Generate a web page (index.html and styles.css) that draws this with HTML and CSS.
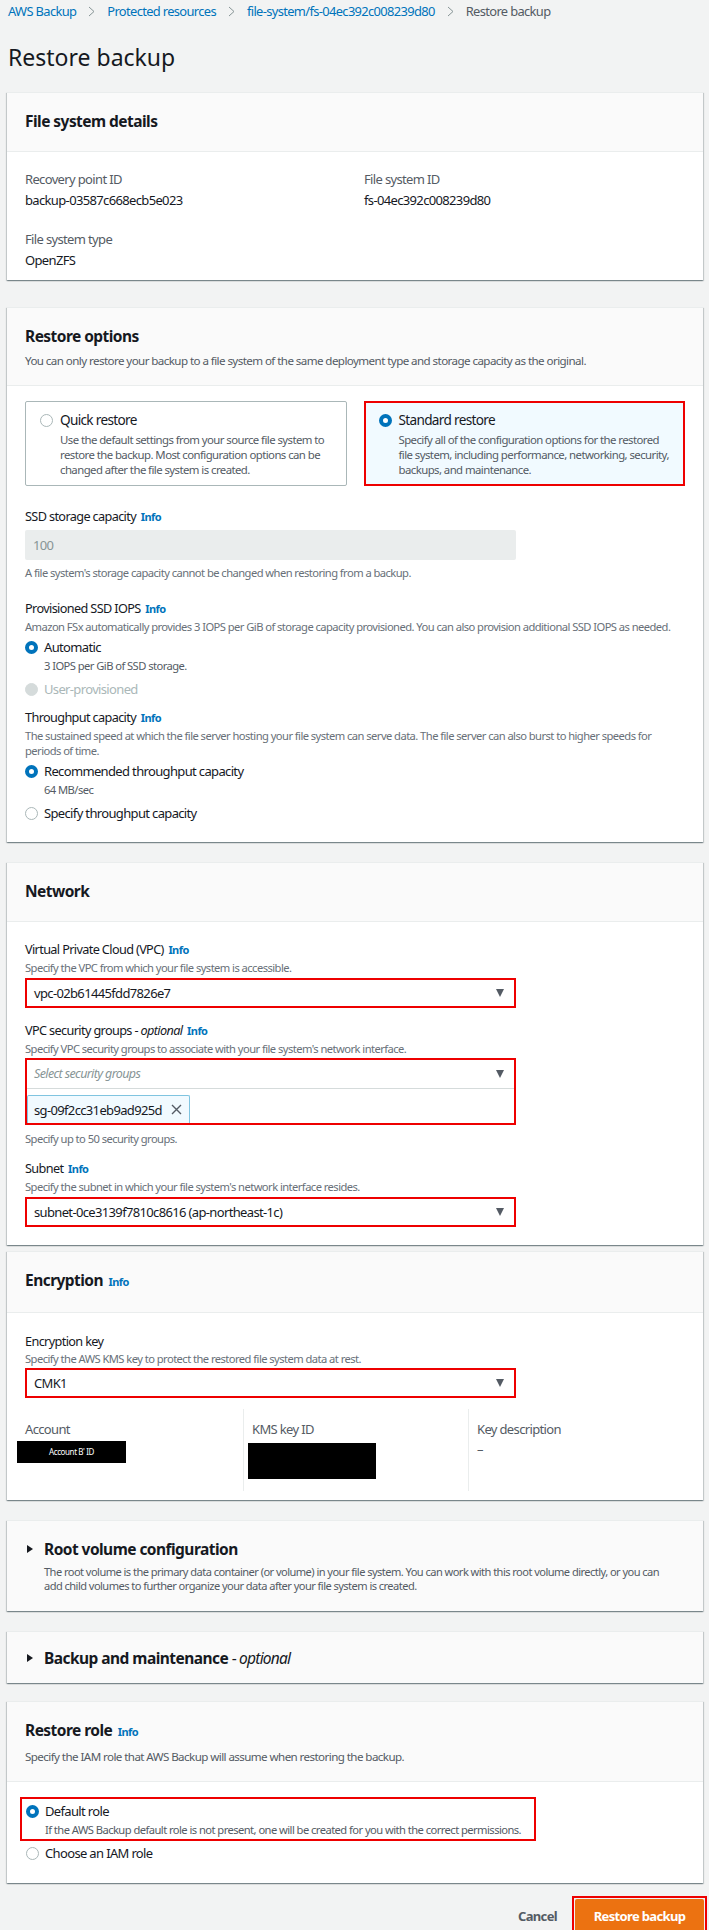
FILE: index.html
```html
<!DOCTYPE html>
<html lang="en">
<head>
<meta charset="utf-8">
<title>Restore backup</title>
<link rel="stylesheet" href="styles.css">
</head>
<body>
<div class="page">
  <nav class="crumbs">
    <a class="crumb-link">AWS Backup</a>
    <svg class="crumb-sep" width="7" height="11" viewBox="0 0 7 11"><path d="M1 1l5 4.5-5 4.5" fill="none" stroke="#879596" stroke-width="1"/></svg>
    <a class="crumb-link">Protected resources</a>
    <svg class="crumb-sep" width="7" height="11" viewBox="0 0 7 11"><path d="M1 1l5 4.5-5 4.5" fill="none" stroke="#879596" stroke-width="1"/></svg>
    <a class="crumb-link">file-system/fs-04ec392c008239d80</a>
    <svg class="crumb-sep" width="7" height="11" viewBox="0 0 7 11"><path d="M1 1l5 4.5-5 4.5" fill="none" stroke="#879596" stroke-width="1"/></svg>
    <span class="crumb-current">Restore backup</span>
  </nav>

  <h1 class="page-title">Restore backup</h1>

  <section class="card card-first">
    <header class="card-head">
      <h2 class="card-title">File system details</h2>
    </header>
    <div class="card-body details">
      <div class="kv">
        <div class="kv-label">Recovery point ID</div>
        <div class="kv-value">backup-03587c668ecb5e023</div>
      </div>
      <div class="kv">
        <div class="kv-label">File system ID</div>
        <div class="kv-value">fs-04ec392c008239d80</div>
      </div>
      <div class="kv">
        <div class="kv-label">File system type</div>
        <div class="kv-value">OpenZFS</div>
      </div>
    </div>
  </section>

  <section class="card card-gap27">
    <header class="card-head has-desc">
      <h2 class="card-title">Restore options</h2>
      <p class="card-desc">You can only restore your backup to a file system of the same deployment type and storage capacity as the original.</p>
    </header>
    <div class="card-body options-body">
      <div class="tiles">
        <div class="tile">
          <span class="radio"></span>
          <div class="tile-text">
            <div class="tile-title">Quick restore</div>
            <div class="tile-desc">Use the default settings from your source file system to restore the backup. Most configuration options can be changed after the file system is created.</div>
          </div>
        </div>
        <div class="tile tile-selected">
          <span class="radio on"></span>
          <div class="tile-text">
            <div class="tile-title">Standard restore</div>
            <div class="tile-desc">Specify all of the configuration options for the restored file system, including performance, networking, security, backups, and maintenance.</div>
          </div>
        </div>
      </div>

      <div class="field f-ssd">
        <div class="label">SSD storage capacity <a class="info">Info</a></div>
        <div class="input-disabled">100</div>
        <div class="helper h-after-input">A file system's storage capacity cannot be changed when restoring from a backup.</div>
      </div>

      <div class="field f-iops">
        <div class="label">Provisioned SSD IOPS <a class="info">Info</a></div>
        <div class="helper">Amazon FSx automatically provides 3 IOPS per GiB of storage capacity provisioned. You can also provision additional SSD IOPS as needed.</div>
        <div class="radios">
          <div class="radio-row">
            <span class="radio on"></span>
            <div>
              <div class="radio-label">Automatic</div>
              <div class="radio-sub">3 IOPS per GiB of SSD storage.</div>
            </div>
          </div>
          <div class="radio-row next">
            <span class="radio disabled"></span>
            <div class="radio-label muted">User-provisioned</div>
          </div>
        </div>
      </div>

      <div class="field f-throughput">
        <div class="label">Throughput capacity <a class="info">Info</a></div>
        <div class="helper">The sustained speed at which the file server hosting your file system can serve data. The file server can also burst to higher speeds for periods of time.</div>
        <div class="radios">
          <div class="radio-row">
            <span class="radio on"></span>
            <div>
              <div class="radio-label">Recommended throughput capacity</div>
              <div class="radio-sub">64 MB/sec</div>
            </div>
          </div>
          <div class="radio-row next">
            <span class="radio"></span>
            <div class="radio-label">Specify throughput capacity</div>
          </div>
        </div>
      </div>
    </div>
  </section>

  <section class="card card-gap20">
    <header class="card-head">
      <h2 class="card-title">Network</h2>
    </header>
    <div class="card-body network-body">
      <div class="field">
        <div class="label">Virtual Private Cloud (VPC) <a class="info">Info</a></div>
        <div class="helper">Specify the VPC from which your file system is accessible.</div>
        <div class="select marked">
          <span class="select-value">vpc-02b61445fdd7826e7</span>
          <span class="caret"></span>
        </div>
      </div>

      <div class="field f-next">
        <div class="label">VPC security groups - <i>optional</i> <a class="info">Info</a></div>
        <div class="helper">Specify VPC security groups to associate with your file system's network interface.</div>
        <div class="multi marked">
          <div class="multi-select">
            <span class="placeholder">Select security groups</span>
            <span class="caret"></span>
          </div>
          <div class="tokens">
            <span class="token">sg-09f2cc31eb9ad925d
              <svg class="token-x" width="11" height="11" viewBox="0 0 11 11"><path d="M1 1l9 9M10 1l-9 9" stroke="#545b64" stroke-width="1.4"/></svg>
            </span>
          </div>
        </div>
        <div class="helper h-after-multi">Specify up to 50 security groups.</div>
      </div>

      <div class="field f-next">
        <div class="label">Subnet <a class="info">Info</a></div>
        <div class="helper">Specify the subnet in which your file system's network interface resides.</div>
        <div class="select marked">
          <span class="select-value">subnet-0ce3139f7810c8616 (ap-northeast-1c)</span>
          <span class="caret"></span>
        </div>
      </div>
    </div>
  </section>

  <section class="card card-gap6">
    <header class="card-head">
      <h2 class="card-title">Encryption <a class="info">Info</a></h2>
    </header>
    <div class="card-body enc-body">
      <div class="field">
        <div class="label">Encryption key</div>
        <div class="helper">Specify the AWS KMS key to protect the restored file system data at rest.</div>
        <div class="select marked">
          <span class="select-value">CMK1</span>
          <span class="caret"></span>
        </div>
      </div>
      <div class="key-cols">
        <div class="key-col">
          <div class="kv-label">Account</div>
          <div class="redact redact-account">Account B' ID</div>
        </div>
        <div class="key-col divided">
          <div class="kv-label">KMS key ID</div>
          <div class="redact redact-kms"></div>
        </div>
        <div class="key-col divided">
          <div class="kv-label">Key description</div>
          <div class="kv-value dash">–</div>
        </div>
      </div>
    </div>
  </section>

  <section class="card card-gap20 collapsed">
    <div class="expander">
      <span class="tri"></span>
      <div>
        <h2 class="card-title">Root volume configuration</h2>
        <p class="card-desc exp-desc">The root volume is the primary data container (or volume) in your file system. You can work with this root volume directly, or you can add child volumes to further organize your data after your file system is created.</p>
      </div>
    </div>
  </section>

  <section class="card card-gap20 collapsed">
    <div class="expander short">
      <span class="tri"></span>
      <h2 class="card-title">Backup and maintenance <span class="opt">- <i>optional</i></span></h2>
    </div>
  </section>

  <section class="card card-gap18">
    <header class="card-head has-desc">
      <h2 class="card-title">Restore role <a class="info">Info</a></h2>
      <p class="card-desc">Specify the IAM role that AWS Backup will assume when restoring the backup.</p>
    </header>
    <div class="card-body role-body">
      <div class="role-mark">
        <div class="radio-row">
          <span class="radio on"></span>
          <div>
            <div class="radio-label">Default role</div>
            <div class="radio-sub nowrap">If the AWS Backup default role is not present, one will be created for you with the correct permissions.</div>
          </div>
        </div>
      </div>
      <div class="radio-row role-next">
        <span class="radio"></span>
        <div class="radio-label">Choose an IAM role</div>
      </div>
    </div>
  </section>

  <div class="actions">
    <button class="btn-link">Cancel</button>
    <div class="btn-mark">
      <button class="btn-primary">Restore backup</button>
    </div>
  </div>
</div>
</body>
</html>
```

FILE: styles.css
```css
* {
  box-sizing: border-box;
  letter-spacing: -0.05em;
}

html, body {
  margin: 0;
  padding: 0;
  background: #f2f3f3;
}

body {
  font-family: "Noto Sans", "Open Sans", "Liberation Sans", sans-serif;
  color: #16191f;
  font-size: 13px;
  line-height: 18px;
}

.page {
  padding: 2px 6px 0 7px;
}

/* breadcrumbs */
.crumbs {
  display: flex;
  align-items: center;
  gap: 12px;
  padding-left: 1px;
  font-size: 12.9px;
  line-height: 18px;
}
.crumb-link { color: #0073bb; }
.crumb-current { color: #545b64; }
.crumb-sep { flex: none; }

.page-title {
  margin: 23px 0 0 1px;
  font-size: 23px;
  line-height: 28px;
  font-weight: 400;
  letter-spacing: 0;
  color: #16191f;
}

/* cards */
.card {
  background: #fff;
  border-top: 1px solid #eaeded;
  box-shadow: 0 1px 1px 0 rgba(0, 28, 36, 0.3), 1px 1px 1px 0 rgba(0, 28, 36, 0.15), -1px 1px 1px 0 rgba(0, 28, 36, 0.15);
}
.card-first { margin-top: 21px; }
.card-gap27 { margin-top: 27px; }
.card-gap20 { margin-top: 20px; }
.card-gap18 { margin-top: 18px; }
.card-gap6 { margin-top: 6px; }

.card-head {
  background: #fafafa;
  border-bottom: 1px solid #eaeded;
  padding: 18px 18px 20px;
}
.card-head.has-desc { padding-bottom: 17px; }

.card-title {
  margin: 0;
  font-size: 15.5px;
  line-height: 20px;
  font-weight: 700;
  letter-spacing: -0.035em;
  color: #16191f;
}

.card-desc {
  margin: 7px 0 0;
  font-size: 11.6px;
  line-height: 15px;
  color: #545b64;
}

.card-body {
  padding: 18px 18px 11px;
}

/* details */
.details {
  display: grid;
  grid-template-columns: 339px 1fr;
  row-gap: 21px;
}
.kv-label {
  color: #545b64;
  font-size: 13px;
  line-height: 18px;
}
.kv-value {
  margin-top: 3px;
  color: #16191f;
  font-size: 13px;
  line-height: 18px;
}

/* info link */
.info {
  color: #0073bb;
  font-size: 11px;
  font-weight: 700;
  margin-left: 2px;
}

/* tiles */
.options-body { padding: 15px 18px 20px; }

.tiles {
  display: grid;
  grid-template-columns: 1fr 1fr;
  gap: 17px;
}
.tile {
  display: flex;
  align-items: flex-start;
  gap: 7px;
  border: 1px solid #aab7b8;
  border-radius: 2px;
  padding: 9px 10px 8px 14px;
  background: #fff;
}
.tile-selected {
  background: #f1faff;
  border: 2px solid #ee0000;
  border-radius: 0;
  padding: 8px 12px 7px 13px;
}
.tile .radio { margin-top: 3px; }
.tile-title {
  font-size: 13.6px;
  line-height: 18px;
  color: #16191f;
}
.tile-desc {
  margin-top: 3px;
  font-size: 11.4px;
  line-height: 15px;
  color: #545b64;
}

/* radio */
.radio {
  flex: none;
  display: block;
  width: 13px;
  height: 13px;
  border-radius: 50%;
  border: 1px solid #aab7b8;
  background: #fff;
}
.radio.on {
  border: 4px solid #0073bb;
}
.radio.disabled {
  border-color: #d5dbdb;
  background: #d5dbdb;
}

.radio-row {
  display: flex;
  align-items: flex-start;
  gap: 6px;
}
.radio-row .radio { margin-top: 2.5px; }
.radio-row.next { margin-top: 7px; }
.radio-label {
  font-size: 13px;
  line-height: 18px;
  color: #16191f;
}
.radio-label.muted { color: #aab7b8; }
.radio-sub {
  margin-top: 2px;
  font-size: 11.2px;
  line-height: 15px;
  color: #545b64;
}
.nowrap { white-space: nowrap; }

/* fields */
.label {
  font-size: 12.7px;
  line-height: 18px;
  color: #16191f;
}
.helper {
  margin-top: 1px;
  font-size: 11.2px;
  line-height: 15px;
  color: #687078;
}
.f-ssd { margin-top: 21px; }
.f-iops { margin-top: 18px; }
.f-throughput { margin-top: 10px; }
.radios { margin-top: 4px; }

.input-disabled {
  margin-top: 4px;
  width: 491px;
  height: 30px;
  background: #eaeded;
  color: #879596;
  font-size: 13px;
  line-height: 30px;
  padding-left: 8px;
  border-radius: 2px;
}
.h-after-input { margin-top: 5px; line-height: 16px; }

/* network */
.network-body { padding: 18px 18px 18px; }
.f-next { margin-top: 13px; }

.select {
  margin-top: 2.5px;
  width: 491px;
  height: 30px;
  display: flex;
  align-items: center;
  justify-content: space-between;
  padding: 0 10px 0 7px;
  border: 1px solid #aab7b8;
  border-radius: 2px;
  font-size: 13px;
  background: #fff;
}
.marked {
  border: 2px solid #ee0000;
  border-radius: 0;
}
.caret {
  width: 0;
  height: 0;
  border-left: 4.5px solid transparent;
  border-right: 4.5px solid transparent;
  border-top: 8px solid #545b64;
}

.multi {
  margin-top: 2.5px;
  width: 491px;
}
.multi-select {
  height: 29px;
  display: flex;
  align-items: center;
  justify-content: space-between;
  padding: 0 10px 0 7px;
  border-bottom: 1px solid #d5dbdb;
}
.placeholder {
  color: #879596;
  font-style: italic;
  font-size: 12.5px;
}
.tokens {
  padding-top: 6px;
  height: 34px;
}
.token {
  display: inline-flex;
  align-items: center;
  gap: 9px;
  height: 28px;
  padding: 0 7px 0 6px;
  background: #f1faff;
  border: 1px solid #7fc4e0;
  border-bottom: none;
  border-radius: 2px 2px 0 0;
  font-size: 13px;
  color: #16191f;
}
.token-x { flex: none; }
.h-after-multi { margin-top: 6px; }

/* encryption */
.enc-body { padding: 19px 18px 9px; }
.key-cols {
  margin-top: 11px;
  display: grid;
  grid-template-columns: 218px 225px 1fr;
  height: 82px;
}
.key-col { padding-top: 11px; }
.key-col.divided {
  border-left: 1px solid #eaeded;
  padding-left: 8px;
}
.redact {
  background: #000;
  color: #fff;
}
.redact-account {
  margin: 3px 0 0 -8px;
  width: 109px;
  height: 22px;
  font-size: 8px;
  line-height: 22px;
  text-align: center;
}
.redact-kms {
  margin: 5px 0 0 -4px;
  width: 128px;
  height: 36px;
}
.dash { margin-top: 2px; color: #545b64; }

/* collapsed expanders */
.collapsed { background: #fafafa; }
.expander {
  display: flex;
  align-items: flex-start;
  gap: 11px;
  padding: 18px 30px 18px 20px;
}
.expander.short { padding: 16px 18px 15px 20px; }
.tri {
  flex: none;
  margin-top: 5.5px;
  width: 0;
  height: 0;
  border-top: 4.5px solid transparent;
  border-bottom: 4.5px solid transparent;
  border-left: 6px solid #16191f;
}
.exp-desc { margin-top: 6px; line-height: 14px; font-size: 11.1px; }
.opt { font-weight: 400; }

/* restore role */
.role-body { padding: 15px 18px 21px; }
.role-mark {
  margin-left: -5px;
  width: 516px;
  border: 2px solid #ee0000;
  padding: 3px 2px 2px 4px;
}
.role-next { margin-top: 3px; padding-left: 1px; }

/* actions */
.actions {
  margin-top: 13px;
  margin-right: -4px;
  display: flex;
  justify-content: flex-end;
  align-items: center;
  gap: 15px;
}
.btn-link {
  border: none;
  background: none;
  padding: 0;
  font-family: inherit;
  font-size: 13px;
  font-weight: 700;
  color: #545b64;
}
.btn-mark {
  border: 2px solid #ee0000;
  padding: 1px;
}
.btn-primary {
  display: block;
  width: 129px;
  height: 33px;
  border: none;
  border-radius: 2px;
  background: #ec7211;
  color: #fff;
  font-family: inherit;
  font-size: 13px;
  font-weight: 700;
}
```
